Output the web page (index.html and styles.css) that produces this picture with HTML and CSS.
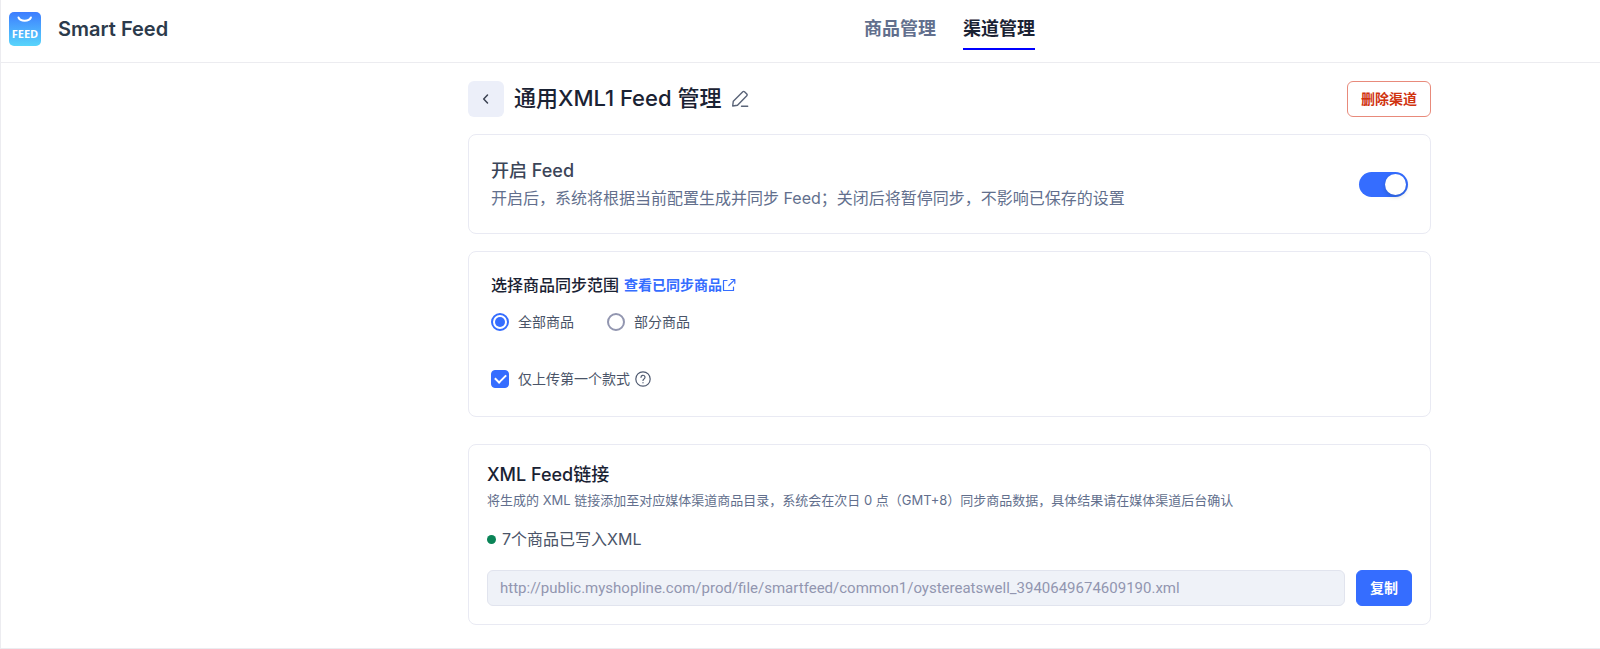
FILE: index.html
```html
<!DOCTYPE html>
<html lang="zh-CN">
<head>
  <meta charset="utf-8">
  <title>Smart Feed</title>
  <meta name="viewport" content="width=device-width, initial-scale=1">
  <link rel="stylesheet" href="styles.css">
</head>
<body>
  <div class="page">
    <header class="header">
      <div class="brand">
        <svg class="logo" width="32" height="34" viewBox="0 0 32 34" aria-hidden="true">
          <defs>
            <linearGradient id="logo-bg" x1="0" y1="0" x2="0" y2="1">
              <stop offset="0" stop-color="#3d7dff"/>
              <stop offset="1" stop-color="#58d5fb"/>
            </linearGradient>
          </defs>
          <rect width="32" height="34" rx="5" fill="url(#logo-bg)"/>
          <path d="M9.500 5.500c1 2.200 3.200 3.200 6.200 3.200s5.200-1 6.200-3.200" fill="none" stroke="#fff" stroke-width="2" stroke-linecap="round"/>
          <text x="16" y="25.500" text-anchor="middle" class="logo-text">FEED</text>
        </svg>
        <span class="brand-name">Smart Feed</span>
      </div>
      <nav class="nav">
        <a class="nav-link" href="#products">商品管理</a>
        <a class="nav-link active" href="#channels" aria-current="page">渠道管理</a>
      </nav>
    </header>

    <main class="main">
      <div class="title-bar">
        <button class="btn-back" type="button" aria-label="返回">
          <svg width="12" height="12" viewBox="0 0 12 12" fill="none" stroke="#3b4252" stroke-width="1.500" stroke-linecap="round" stroke-linejoin="round"><path d="M7.500 2L3.700 6l3.800 4"/></svg>
        </button>
        <h1 class="title">通用XML1 Feed 管理</h1>
        <button class="btn-edit" type="button" aria-label="编辑">
          <svg width="18" height="18" viewBox="0 0 18 18" fill="none" stroke="#5a6478" stroke-width="1.400" stroke-linecap="round" stroke-linejoin="round"><path d="M1.700 16l.6-4.800L11.800 1.700a1.200 1.200 0 0 1 1.700 0l2.300 2.300a1.200 1.200 0 0 1 0 1.700L6.500 15.200zM10.500 16.200h6.200"/></svg>
        </button>
        <button class="btn btn-danger" type="button">删除渠道</button>
      </div>

      <section class="card card-switch">
        <div>
          <h2 class="switch-title"><label for="enable-feed">开启 Feed</label></h2>
          <p class="switch-desc">开启后，系统将根据当前配置生成并同步 Feed；关闭后将暂停同步，不影响已保存的设置</p>
        </div>
        <input class="switch" id="enable-feed" type="checkbox" role="switch" checked>
      </section>

      <section class="card card-range">
        <div class="range-head">
          <h2 class="range-title" id="range-title">选择商品同步范围</h2>
          <a class="range-link" href="#synced">查看已同步商品<svg width="14" height="14" viewBox="0 0 14 14" fill="none" stroke="currentColor" stroke-width="1.200" stroke-linecap="round" stroke-linejoin="round"><path d="M5 2.500H1.500v10h10V9M9 1.500h3.800v3.800M12.500 1.800L6.800 7.500"/></svg></a>
        </div>
        <div class="radios" role="radiogroup" aria-labelledby="range-title">
          <label class="option"><input class="radio" type="radio" name="range" value="all" checked>全部商品</label>
          <label class="option"><input class="radio" type="radio" name="range" value="part">部分商品</label>
        </div>
        <div class="first-only">
          <label class="option"><input class="checkbox" type="checkbox" checked>仅上传第一个款式</label>
          <svg width="16" height="16" viewBox="0 0 16 16" fill="none" stroke="#4f5a70" stroke-width="1.200" stroke-linecap="round" stroke-linejoin="round"><circle cx="8" cy="8" r="7.200"/><path d="M6 6.300a2 2 0 1 1 3 1.700c-.7.400-1 .7-1 1.500M8 11.600v.2"/></svg>
        </div>
      </section>

      <section class="card card-link">
        <h2 class="link-title"><label for="feed-url">XML Feed链接</label></h2>
        <p class="link-desc">将生成的 XML 链接添加至对应媒体渠道商品目录，系统会在次日 0 点（GMT+8）同步商品数据，具体结果请在媒体渠道后台确认</p>
        <p class="status">7个商品已写入XML</p>
        <div class="url-row">
          <input class="url" id="feed-url" type="text" value="http://public.myshopline.com/prod/file/smartfeed/common1/oystereatswell_3940649674609190.xml" disabled>
          <button class="btn btn-primary" type="button">复制</button>
        </div>
      </section>
    </main>
  </div>
</body>
</html>
```
FILE: styles.css
```css
* {
  box-sizing: border-box;
}
body {
  margin: 0;
  background: #fff;
  color: #1a2233;
  font-family: Inter, "Noto Sans CJK SC", sans-serif;
  font-size: 14px;
}
h1, h2, p {
  margin: 0;
}
h1, h2 {
  font-weight: 500;
}
button, input {
  margin: 0;
  font-family: inherit;
}
.page {
  min-height: 100vh;
  border-left: 1px solid #ececf0;
  border-bottom: 1px solid #ececf0;
}

/* header */
.header {
  display: grid;
  grid-template-columns: 298px 1fr;
  height: 63px;
  border-bottom: 1px solid #ececf0;
}
.brand {
  display: flex;
  align-items: center;
  gap: 17px;
  padding: 0 0 4px 8px;
}
.logo-text {
  fill: #fff;
  font-family: "Open Sans", sans-serif;
  font-size: 11px;
  font-weight: 700;
}
.brand-name {
  color: #2c3a4b;
  font-size: 20px;
  font-weight: 600;
}
.nav {
  display: flex;
  justify-content: center;
  align-items: flex-start;
  gap: 27px;
  padding-top: 8px;
}
.nav-link {
  height: 42px;
  border-bottom: 2px solid transparent;
  color: #626f8d;
  font-size: 18px;
  font-weight: 700;
  line-height: 42px;
  text-decoration: none;
}
.nav-link.active {
  border-color: #00f;
  color: #1a2233;
}

.main {
  margin-left: 298px;
  padding: 18px 0 22px;
}
.main > * {
  max-width: 963px;
  margin: 0 auto;
}

/* title bar */
.title-bar {
  display: flex;
  align-items: center;
}
.btn-back {
  display: flex;
  align-items: center;
  justify-content: center;
  width: 36px;
  height: 36px;
  padding: 0;
  border: 0;
  border-radius: 6px;
  background: #eceff9;
}
.title {
  margin: 0 10px;
  padding-bottom: 2px;
  font-size: 22px;
  line-height: 34px;
}
.btn-edit {
  display: flex;
  padding: 0;
  border: 0;
  background: none;
}
.btn {
  height: 36px;
  padding: 0 13px 2px;
  border: 1px solid;
  border-radius: 6px;
  font-size: 14px;
  font-weight: 700;
}
.btn-danger {
  margin-left: auto;
  border-color: #e88a7b;
  background: #fff;
  color: #d0330f;
}
.btn-primary {
  border-color: #356dff;
  background: #356dff;
  color: #fff;
}

/* cards */
.main > .card {
  margin-top: 17px;
  border: 1px solid #e9eaf3;
  border-radius: 8px;
}
.card-switch {
  display: flex;
  align-items: center;
  justify-content: space-between;
  padding: 22px;
}
.switch-title {
  color: #3b4558;
  font-size: 18px;
  line-height: 28px;
}
.switch-desc {
  color: #626f8d;
  font-size: 16px;
  line-height: 26px;
}
.switch {
  appearance: none;
  flex: none;
  width: 49px;
  height: 25px;
  padding: 2px;
  border-radius: 13px;
  background: #356dff;
}
.switch::before {
  content: "";
  display: block;
  width: 21px;
  height: 21px;
  margin-left: auto;
  border-radius: 50%;
  background: #fff;
  box-shadow: 0 2px 4px rgba(0,35,11,.2);
}

.card-range {
  padding: 20px 22px 24px;
}
.range-head {
  display: flex;
  align-items: center;
  gap: 5px;
  line-height: 26px;
}
.range-title {
  font-size: 16px;
}
.range-link {
  display: flex;
  align-items: center;
  color: #356dff;
  font-size: 14px;
  font-weight: 700;
  text-decoration: none;
}
.radios {
  display: flex;
  gap: 33px;
  margin: 11px 0 31px;
}
.option {
  display: flex;
  align-items: center;
  gap: 9px;
  color: #4a5468;
  line-height: 26px;
}
.radio,
.checkbox {
  appearance: none;
  display: grid;
  place-items: center;
  width: 18px;
  height: 18px;
}
.radio {
  border: 2px solid #9296b0;
  border-radius: 50%;
}
.radio:checked {
  border-color: #356dff;
}
.radio:checked::before {
  content: "";
  width: 10px;
  height: 10px;
  border-radius: 50%;
  background: #356dff;
}
.checkbox {
  border: 1px solid #9296b0;
  border-radius: 4px;
}
.checkbox:checked {
  border-color: #356dff;
  background: #356dff;
}
.checkbox:checked::before {
  content: "";
  width: 9px;
  height: 5px;
  margin-bottom: 3px;
  border: solid #fff;
  border-width: 0 0 2px 2px;
  transform: rotate(-45deg);
}
.first-only {
  display: flex;
  align-items: center;
  gap: 5px;
}

.main > .card-link {
  margin-top: 27px;
  padding: 18px;
}
.link-title {
  font-size: 18px;
  line-height: 24px;
}
.link-desc {
  color: #626f8d;
  font-size: 13px;
  line-height: 26px;
}
.status {
  display: flex;
  align-items: center;
  gap: 6px;
  margin: 14px 0 19px;
  color: #4a5468;
  font-size: 16px;
  line-height: 24px;
}
.status::before {
  content: "";
  width: 9px;
  height: 9px;
  border-radius: 50%;
  background: #0a8457;
}
.url-row {
  display: flex;
  gap: 11px;
}
.url {
  flex: 1;
  min-width: 0;
  height: 36px;
  padding: 0 12px;
  border: 1px solid #e1e4ee;
  border-radius: 6px;
  background: #eff2f8;
  color: #9296b0;
  font-family: Roboto, sans-serif;
  font-size: 15px;
}
```
